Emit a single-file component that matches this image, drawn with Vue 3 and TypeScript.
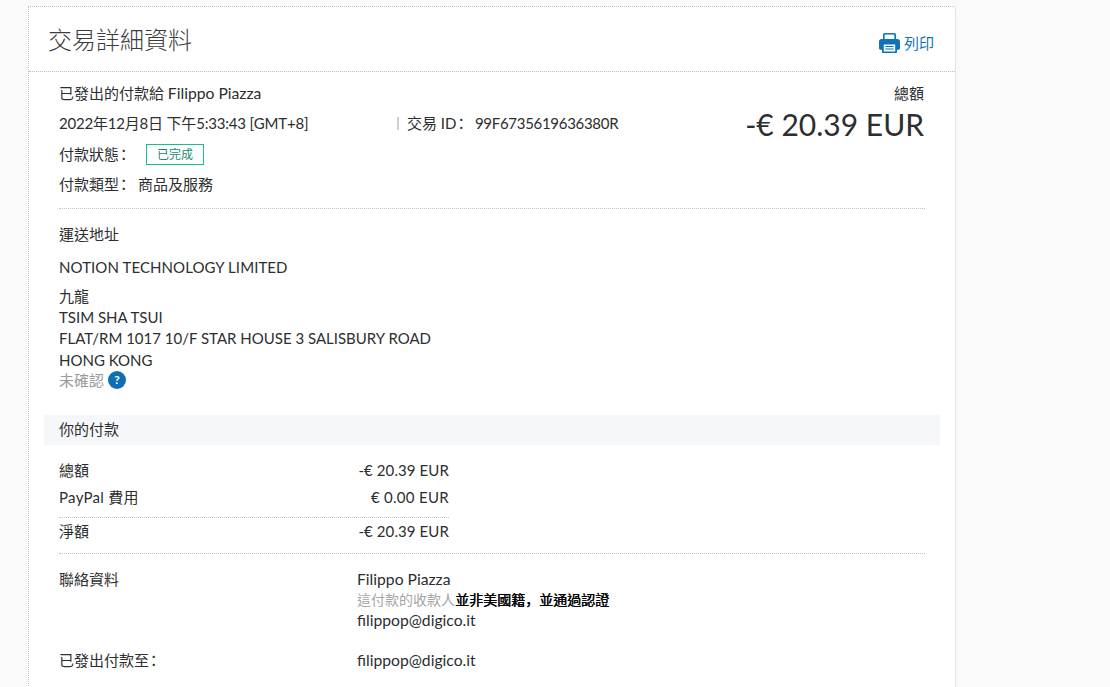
<script setup lang="ts">
const totals = [
  { label: '總額', value: '-€ 20.39 EUR', cls: 'r1' },
  { label: 'PayPal 費用', value: '€ 0.00 EUR', cls: 'r2' },
]
const address = ['TSIM SHA TSUI', 'FLAT/RM 1017 10/F STAR HOUSE 3 SALISBURY ROAD', 'HONG KONG']
</script>

<template>
  <div class="page">
    <section class="card">
      <header class="head">
        <h1>交易詳細資料</h1>
        <a class="print">
          <svg width="21" height="20" viewBox="0 0 21 20">
            <path fill="#0f73b7" d="M4 1.800C4 .8 4.800 0 5.800 0h9.400c1 0 1.800.8 1.800 1.800V6h-1.600V2.200c0-.4-.3-.7-.7-.7H6.300c-.4 0-.7.3-.7.7V6H4z"/>
            <path fill="#0f73b7" d="M2.500 6h16C19.900 6 21 7.100 21 8.500V15c0 1-.8 1.800-1.800 1.800H18V19c0 .6-.4 1-1 1H4c-.6 0-1-.4-1-1v-2.200H1.800C.8 16.800 0 16 0 15V8.500C0 7.100 1.100 6 2.500 6z"/>
            <path fill="#fff" d="M4.800 11.500h11.400V18.500H4.800z"/>
            <path fill="#0f73b7" d="M6.300 13h8.400v1H6.300zM6.300 15.500h8.400v1H6.300z"/>
          </svg>
          <span>列印</span>
        </a>
      </header>

      <div class="body">
        <div class="summary">
          <div class="sum-left">
            <div class="line l1"><span>已發出的付款給 <span class="lc">Filippo Piazza</span></span></div>
            <div class="line l2">
              <span class="date">2022年12月8日 下午5:33:43 [GMT+8]</span>
              <span class="txid">交易 ID<span class="c id-c">：</span><span class="idv">99F6735619636380R</span></span>
            </div>
            <div class="line l3"><span class="k">付款狀態<span class="c">：</span></span><span class="badge">已完成</span></div>
            <div class="line l4"><span class="k2">付款類型<span class="c">：</span></span><span>商品及服務</span></div>
          </div>
          <div class="sum-right">
            <div class="tot-label">總額</div>
            <div class="tot-value">-€ 20.39 EUR</div>
          </div>
        </div>

        <div class="rule"></div>

        <div class="addr-title">運送地址</div>
        <div class="addr-name">NOTION TECHNOLOGY LIMITED</div>
        <div class="addr-lines">
          <div>九龍</div>
          <div v-for="a in address" :key="a">{{ a }}</div>
          <div class="unconfirmed">未確認 <span class="help">?</span></div>
        </div>

        <div class="band">你的付款</div>

        <div class="amounts">
          <div v-for="t in totals" :key="t.label" class="amt" :class="t.cls">
            <span>{{ t.label }}</span><span>{{ t.value }}</span>
          </div>
          <div class="amt net"><span>淨額</span><span>-€ 20.39 EUR</span></div>
        </div>

        <div class="rule r-contact"></div>

        <div class="kv contact">
          <div>聯絡資料</div>
          <div>
            <div class="lc">Filippo Piazza</div>
            <div class="note"><span class="muted">這付款的收款人</span><span class="strong">並非美國籍<span class="comma">，</span>並通過認證</span></div>
            <div class="lc">filippop@digico.it</div>
          </div>
        </div>
        <div class="kv sent">
          <div>已發出付款至<span class="c">：</span></div>
          <div class="lc">filippop@digico.it</div>
        </div>
      </div>
    </section>
  </div>
</template>

<style scoped>
.page {
  height: 687px;
  overflow: hidden;
  background: #fafafa;
  padding: 6px 0 0 28px;
  box-sizing: border-box;
  font-family: Lato, "Noto Sans CJK TC", sans-serif;
  font-size: 15px;
  color: #2c2e2f;
  line-height: 21px;
}
.card {
  width: 928px;
  min-height: 760px;
  box-sizing: border-box;
  background: #fff;
  border-top: 1px dotted #c4c4c4;
  border-left: 1px dotted #c4c4c4;
  border-right: 1px solid #e4e4e4;
  border-radius: 0 3px 0 0;
}
.head {
  height: 65px;
  box-sizing: border-box;
  border-bottom: 1px dotted #bdbdbd;
  display: flex;
  justify-content: space-between;
  align-items: center;
  padding: 0 21px 0 19px;
}
h1 {
  margin: 2px 0 0;
  font-size: 24px;
  font-weight: 300;
  line-height: 32px;
  color: #3c3c3c;
}
.print {
  display: flex;
  align-items: center;
  gap: 4px;
  color: #0f73b7;
  font-size: 15px;
  margin-top: 8px;
}
.body { padding: 0 30px; }
.summary { display: flex; justify-content: space-between; }
.sum-left { flex: 1; }
.line { display: flex; align-items: center; }
.l1 { height: 21px; margin-top: 11px; }
.l2 { height: 21px; margin-top: 9px; }
.l3 { height: 21px; margin-top: 10px; }
.l4 { height: 21px; margin-top: 9px; }
.lc { font-size: 15.7px; }
.c { font-feature-settings: "palt"; margin-left: 1px; }
.id-c { margin-right: 10px; }
.comma { font-family: "Noto Sans CJK SC", sans-serif; line-height: 1; }
.date { width: 338px; letter-spacing: -0.2px; }
.txid { border-left: 2px solid #cfcfcf; padding-left: 8px; line-height: 13px; }
.idv { letter-spacing: -0.3px; }
.k { width: 87px; }
.k2 { width: 79px; }
.badge {
  width: 58px;
  height: 21px;
  box-sizing: border-box;
  border: 1px solid #1bbf8e;
  color: #1b8a70;
  font-size: 12px;
  line-height: 19px;
  text-align: center;
}
.sum-right { text-align: right; padding: 11px 1px 0 0; }
.tot-label { line-height: 21px; }
.tot-value { font-size: 30px; line-height: 36px; margin-top: 2px; color: #2c2e2f; }
.rule { border-top: 1px dotted #c4c4c4; margin-top: 13px; }
.addr-title { margin-top: 15px; }
.addr-name { margin-top: 12px; letter-spacing: 0.08px; }
.addr-lines { margin-top: 8px; line-height: 21.2px; }
.unconfirmed { color: #9a9a9a; display: flex; align-items: center; gap: 4px; margin-top: -1px; }
.help {
  width: 18px;
  height: 18px;
  border-radius: 50%;
  background: #0f6fb3;
  color: #fff;
  font-size: 12px;
  font-weight: 700;
  line-height: 18px;
  text-align: center;
  margin-top: -1px;
}
.band {
  margin: 24px -15px 0;
  padding: 0 15px;
  height: 30px;
  line-height: 29px;
  background: #f5f7fa;
}
.amounts { width: 390px; margin-top: 15px; }
.amt { display: flex; justify-content: space-between; letter-spacing: 0.1px; }
.r2 { margin-top: 6px; padding-bottom: 9px; border-bottom: 1px dotted #c4c4c4; letter-spacing: 0.3px; }
.net { margin-top: 3px; }
.r-contact { margin-top: 11px; }
.kv { display: grid; grid-template-columns: 298px 1fr; }
.contact { margin-top: 15px; }
.note { font-size: 14px; line-height: 20px; height: 20px; }
.sent { margin-top: 19px; }
.muted { color: #a5a5a5; }
.strong { color: #000; text-shadow: 0.6px 0 0 #000; }
</style>

<style>
html, body { margin: 0; background: #fafafa; overflow: hidden; }
</style>
